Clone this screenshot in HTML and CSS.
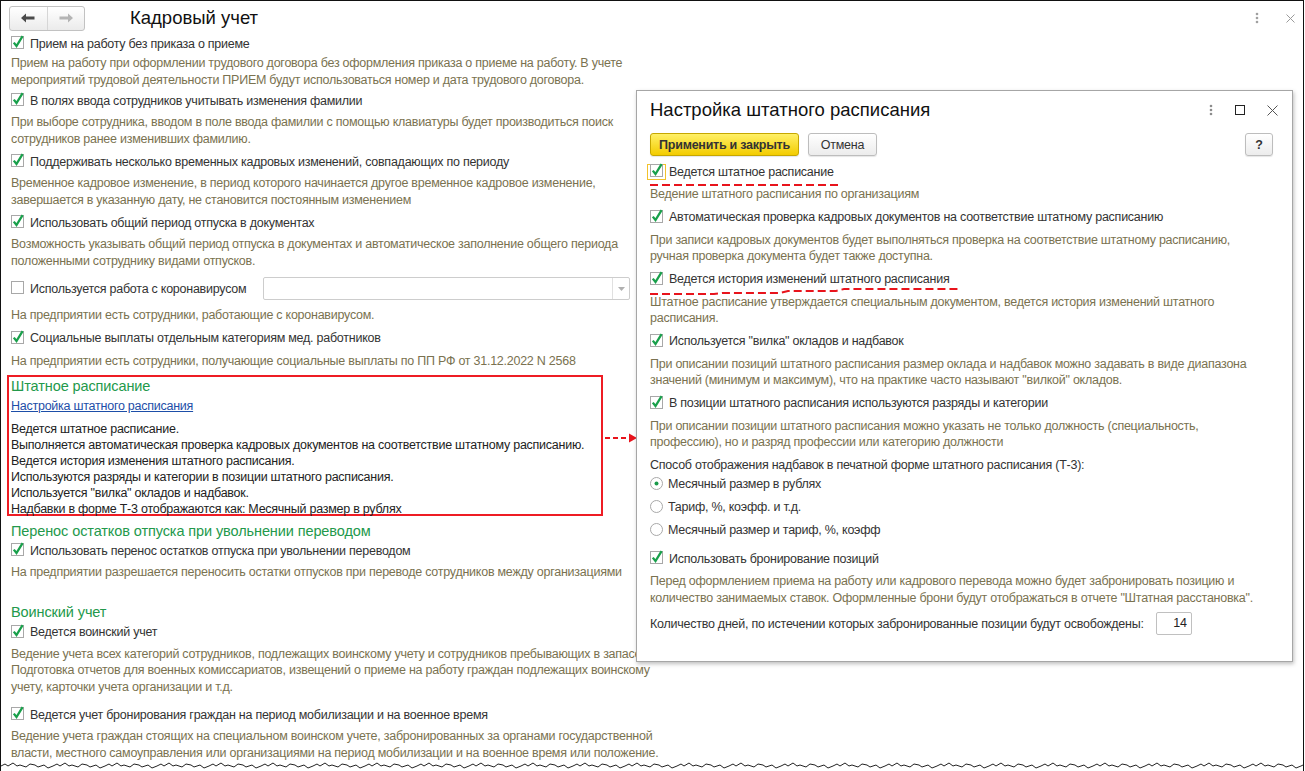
FILE: index.html
```html
<!DOCTYPE html>
<html lang="ru">
<head>
<meta charset="UTF-8">
<title>Кадровый учет</title>
<link rel="stylesheet" href="styles.css">
</head>
<body>
<div class="screen">

  <div class="topbar">
    <div class="nav">
      <span class="nav-btn">
        <svg width="14" height="10" viewBox="0 0 14 10"><path d="M0 5L5 0.5V3.5H13.5V6.5H5V9.5Z" fill="#4a4a4a"/></svg>
      </span>
      <span class="nav-btn">
        <svg width="14" height="10" viewBox="0 0 14 10"><path d="M14 5L9 0.5V3.5H0.5V6.5H9V9.5Z" fill="#b4b4b4"/></svg>
      </span>
    </div>
    <h1 class="title">Кадровый учет</h1>
    <div class="page-menu">
      <svg width="4" height="12" viewBox="0 0 4 12"><circle cx="2" cy="2" r="1.3" fill="#a0a0a0"/><circle cx="2" cy="6" r="1.3" fill="#a0a0a0"/><circle cx="2" cy="10" r="1.3" fill="#a0a0a0"/></svg>
      <svg width="9" height="9" viewBox="0 0 9 9"><path d="M0.5 0.5L8.5 8.5M8.5 0.5L0.5 8.5" stroke="#9a9a9a" stroke-width="1"/></svg>
    </div>
  </div>

  <div class="content">
    <div class="check">
      <svg class="cb" width="14" height="15" viewBox="0 0 14 15"><rect x="0.5" y="1.5" width="12" height="12" fill="#fff" stroke="#a8a8a8"/><path d="M2.8 7.6l2.7 3.4L11.6 1.2" fill="none" stroke="#19a04b" stroke-width="2.3"/></svg>
      <span>Прием на работу без приказа о приеме</span>
    </div>
    <div class="desc desc-first">Прием на работу при оформлении трудового договора без оформления приказа о приеме на работу. В учете<br>мероприятий трудовой деятельности ПРИЕМ будут использоваться номер и дата трудового договора.</div>

    <div class="check">
      <svg class="cb" width="14" height="15" viewBox="0 0 14 15"><rect x="0.5" y="1.5" width="12" height="12" fill="#fff" stroke="#a8a8a8"/><path d="M2.8 7.6l2.7 3.4L11.6 1.2" fill="none" stroke="#19a04b" stroke-width="2.3"/></svg>
      <span>В полях ввода сотрудников учитывать изменения фамилии</span>
    </div>
    <div class="desc">При выборе сотрудника, вводом в поле ввода фамилии с помощью клавиатуры будет производиться поиск<br>сотрудников ранее изменивших фамилию.</div>

    <div class="check">
      <svg class="cb" width="14" height="15" viewBox="0 0 14 15"><rect x="0.5" y="1.5" width="12" height="12" fill="#fff" stroke="#a8a8a8"/><path d="M2.8 7.6l2.7 3.4L11.6 1.2" fill="none" stroke="#19a04b" stroke-width="2.3"/></svg>
      <span>Поддерживать несколько временных кадровых изменений, совпадающих по периоду</span>
    </div>
    <div class="desc">Временное кадровое изменение, в период которого начинается другое временное кадровое изменение,<br>завершается в указанную дату, не становится постоянным изменением</div>

    <div class="check">
      <svg class="cb" width="14" height="15" viewBox="0 0 14 15"><rect x="0.5" y="1.5" width="12" height="12" fill="#fff" stroke="#a8a8a8"/><path d="M2.8 7.6l2.7 3.4L11.6 1.2" fill="none" stroke="#19a04b" stroke-width="2.3"/></svg>
      <span>Использовать общий период отпуска в документах</span>
    </div>
    <div class="desc">Возможность указывать общий период отпуска в документах и автоматическое заполнение общего периода<br>положенными сотруднику видами отпусков.</div>

    <div class="check check-combo">
      <svg class="cb" width="14" height="15" viewBox="0 0 14 15"><rect x="0.5" y="1.5" width="12" height="12" fill="#fff" stroke="#a8a8a8"/></svg>
      <span>Используется работа с коронавирусом</span>
      <div class="combo"><span class="combo-btn"><svg width="7" height="4" viewBox="0 0 7 4"><path d="M0 0H7L3.5 4Z" fill="#b0b0b0"/></svg></span></div>
    </div>
    <div class="desc desc-short">На предприятии есть сотрудники, работающие с коронавирусом.</div>

    <div class="check">
      <svg class="cb" width="14" height="15" viewBox="0 0 14 15"><rect x="0.5" y="1.5" width="12" height="12" fill="#fff" stroke="#a8a8a8"/><path d="M2.8 7.6l2.7 3.4L11.6 1.2" fill="none" stroke="#19a04b" stroke-width="2.3"/></svg>
      <span>Социальные выплаты отдельным категориям мед. работников</span>
    </div>
    <div class="desc desc-tail">На предприятии есть сотрудники, получающие социальные выплаты по ПП РФ от 31.12.2022 N 2568</div>

    <div class="marked">
      <div class="group-title">Штатное расписание</div>
      <a class="link" href="#">Настройка штатного расписания</a>
      <div class="summary">Ведется штатное расписание.<br>Выполняется автоматическая проверка кадровых документов на соответствие штатному расписанию.<br>Ведется история изменения штатного расписания.<br>Используются разряды и категории в позиции штатного расписания.<br>Используется "вилка" окладов и надбавок.<br>Надбавки в форме Т-3 отображаются как: Месячный размер в рублях</div>
    </div>

    <div class="group-title group-gap">Перенос остатков отпуска при увольнении переводом</div>
    <div class="check">
      <svg class="cb" width="14" height="15" viewBox="0 0 14 15"><rect x="0.5" y="1.5" width="12" height="12" fill="#fff" stroke="#a8a8a8"/><path d="M2.8 7.6l2.7 3.4L11.6 1.2" fill="none" stroke="#19a04b" stroke-width="2.3"/></svg>
      <span>Использовать перенос остатков отпуска при увольнении переводом</span>
    </div>
    <div class="desc">На предприятии разрешается переносить остатки отпусков при переводе сотрудников между организациями</div>

    <div class="group-title group-gap-lg">Воинский учет</div>
    <div class="check">
      <svg class="cb" width="14" height="15" viewBox="0 0 14 15"><rect x="0.5" y="1.5" width="12" height="12" fill="#fff" stroke="#a8a8a8"/><path d="M2.8 7.6l2.7 3.4L11.6 1.2" fill="none" stroke="#19a04b" stroke-width="2.3"/></svg>
      <span>Ведется воинский учет</span>
    </div>
    <div class="desc desc-loose">Ведение учета всех категорий сотрудников, подлежащих воинскому учету и сотрудников пребывающих в запасе.<br>Подготовка отчетов для военных комиссариатов, извещений о приеме на работу граждан подлежащих воинскому<br>учету, карточки учета организации и т.д.</div>

    <div class="check">
      <svg class="cb" width="14" height="15" viewBox="0 0 14 15"><rect x="0.5" y="1.5" width="12" height="12" fill="#fff" stroke="#a8a8a8"/><path d="M2.8 7.6l2.7 3.4L11.6 1.2" fill="none" stroke="#19a04b" stroke-width="2.3"/></svg>
      <span>Ведется учет бронирования граждан на период мобилизации и на военное время</span>
    </div>
    <div class="desc">Ведение учета граждан стоящих на специальном воинском учете, забронированных за органами государственной<br>власти, местного самоуправления или организациями на период мобилизации и на военное время или положение.</div>
  </div>

  <!-- стрелка от блока к форме -->
  <svg class="pointer" width="34" height="12" viewBox="0 0 34 12"><path d="M0 6H24" stroke="#e8141c" stroke-width="2" stroke-dasharray="5 3"/><path d="M24 1.5L32 6L24 10.5Z" fill="#e8141c"/></svg>

  <div class="dialog">
    <div class="dlg-head">
      <div class="dlg-title">Настройка штатного расписания</div>
      <div class="dlg-icons">
        <svg width="4" height="12" viewBox="0 0 4 12"><circle cx="2" cy="2" r="1.3" fill="#8c8c8c"/><circle cx="2" cy="6" r="1.3" fill="#8c8c8c"/><circle cx="2" cy="10" r="1.3" fill="#8c8c8c"/></svg>
        <svg width="10" height="10" viewBox="0 0 10 10"><rect x="0.5" y="0.5" width="9" height="9" fill="none" stroke="#222"/></svg>
        <svg width="11" height="11" viewBox="0 0 11 11"><path d="M0.5 0.5L10.5 10.5M10.5 0.5L0.5 10.5" stroke="#555" stroke-width="1"/></svg>
      </div>
    </div>

    <div class="dlg-buttons">
      <button class="btn btn-primary">Применить и закрыть</button>
      <button class="btn btn-cancel">Отмена</button>
      <button class="btn btn-help">?</button>
    </div>

    <div class="check check-first">
      <span class="focus"><svg class="cb" width="14" height="15" viewBox="0 0 14 15"><rect x="0.5" y="1.5" width="12" height="12" fill="#fff" stroke="#a8a8a8"/><path d="M2.8 7.6l2.7 3.4L11.6 1.2" fill="none" stroke="#19a04b" stroke-width="2.3"/></svg></span>
      <span>Ведется штатное расписание</span>
    </div>
    <div class="desc">Ведение штатного расписания по организациям</div>

    <div class="check">
      <svg class="cb" width="14" height="15" viewBox="0 0 14 15"><rect x="0.5" y="1.5" width="12" height="12" fill="#fff" stroke="#a8a8a8"/><path d="M2.8 7.6l2.7 3.4L11.6 1.2" fill="none" stroke="#19a04b" stroke-width="2.3"/></svg>
      <span>Автоматическая проверка кадровых документов на соответствие штатному расписанию</span>
    </div>
    <div class="desc">При записи кадровых документов будет выполняться проверка на соответствие штатному расписанию,<br>ручная проверка документа будет также доступна.</div>

    <div class="check">
      <svg class="cb" width="14" height="15" viewBox="0 0 14 15"><rect x="0.5" y="1.5" width="12" height="12" fill="#fff" stroke="#a8a8a8"/><path d="M2.8 7.6l2.7 3.4L11.6 1.2" fill="none" stroke="#19a04b" stroke-width="2.3"/></svg>
      <span>Ведется история изменений штатного расписания</span>
    </div>
    <div class="desc">Штатное расписание утверждается специальным документом, ведется история изменений штатного<br>расписания.</div>

    <div class="check">
      <svg class="cb" width="14" height="15" viewBox="0 0 14 15"><rect x="0.5" y="1.5" width="12" height="12" fill="#fff" stroke="#a8a8a8"/><path d="M2.8 7.6l2.7 3.4L11.6 1.2" fill="none" stroke="#19a04b" stroke-width="2.3"/></svg>
      <span>Используется "вилка" окладов и надбавок</span>
    </div>
    <div class="desc">При описании позиций штатного расписания размер оклада и надбавок можно задавать в виде диапазона<br>значений (минимум и максимум), что на практике часто называют "вилкой" окладов.</div>

    <div class="check">
      <svg class="cb" width="14" height="15" viewBox="0 0 14 15"><rect x="0.5" y="1.5" width="12" height="12" fill="#fff" stroke="#a8a8a8"/><path d="M2.8 7.6l2.7 3.4L11.6 1.2" fill="none" stroke="#19a04b" stroke-width="2.3"/></svg>
      <span>В позиции штатного расписания используются разряды и категории</span>
    </div>
    <div class="desc">При описании позиции штатного расписания можно указать не только должность (специальность,<br>профессию), но и разряд профессии или категорию должности</div>

    <div class="label">Способ отображения надбавок в печатной форме штатного расписания (Т-3):</div>
    <div class="radio">
      <svg width="13" height="13" viewBox="0 0 13 13"><circle cx="6.5" cy="6.5" r="6" fill="#fff" stroke="#a8a8a8"/><circle cx="6.5" cy="6.5" r="2" fill="#1a9a4a"/></svg>
      <span>Месячный размер в рублях</span>
    </div>
    <div class="radio">
      <svg width="13" height="13" viewBox="0 0 13 13"><circle cx="6.5" cy="6.5" r="6" fill="#fff" stroke="#a8a8a8"/></svg>
      <span>Тариф, %, коэфф. и т.д.</span>
    </div>
    <div class="radio">
      <svg width="13" height="13" viewBox="0 0 13 13"><circle cx="6.5" cy="6.5" r="6" fill="#fff" stroke="#a8a8a8"/></svg>
      <span>Месячный размер и тариф, %, коэфф</span>
    </div>

    <div class="check check-after-radio">
      <svg class="cb" width="14" height="15" viewBox="0 0 14 15"><rect x="0.5" y="1.5" width="12" height="12" fill="#fff" stroke="#a8a8a8"/><path d="M2.8 7.6l2.7 3.4L11.6 1.2" fill="none" stroke="#19a04b" stroke-width="2.3"/></svg>
      <span>Использовать бронирование позиций</span>
    </div>
    <div class="desc">Перед оформлением приема на работу или кадрового перевода можно будет забронировать позицию и<br>количество занимаемых ставок. Оформленные брони будут отображаться в отчете "Штатная расстановка".</div>

    <div class="field">
      <span>Количество дней, по истечении которых забронированные позиции будут освобождены:</span>
      <span class="num-input">14</span>
    </div>

    <!-- пометки красным пунктиром -->
    <svg class="mark mark-first" width="190" height="4" viewBox="0 0 190 4"><path d="M0 2H188" stroke="#e8141c" stroke-width="2" stroke-dasharray="8 4"/></svg>
    <svg class="mark mark-history" width="312" height="10" viewBox="0 0 312 10"><path d="M0 8H64L72 7H130L138 5H186L194 3H310" fill="none" stroke="#e8141c" stroke-width="2" stroke-dasharray="8 4"/></svg>
  </div>

  <svg class="torn" width="1305" height="14">
    <defs>
      <pattern id="tear" width="52" height="14" patternUnits="userSpaceOnUse">
        <path d="M0 6l4 -2l3 2l5 -3l4 3l3 -1l6 2l4 -3l5 1l3 2l6 -2l4 3l5 -2V14H0Z" fill="#fff"/>
        <path d="M0 6l4 -2l3 2l5 -3l4 3l3 -1l6 2l4 -3l5 1l3 2l6 -2l4 3l5 -2" fill="none" stroke="#222" stroke-width="1"/>
      </pattern>
    </defs>
    <rect width="1305" height="14" fill="url(#tear)"/>
  </svg>
</div>
</body>
</html>
```

FILE: styles.css
```css
/* Кадровый учет + форма настройки */
body { margin: 0; font-family: "Liberation Sans", Arial, sans-serif; font-size: 12.5px; letter-spacing: -0.25px; color: #333; background: #fff; }
.screen { position: relative; width: 1304px; height: 771px; border: 1px solid #111; border-bottom: none; box-sizing: border-box; overflow: hidden; background: #fff; }

.topbar { display: flex; align-items: center; height: 24px; padding: 5px 0 0 8px; }
.nav { display: flex; width: 76px; height: 25px; border: 1px solid #c2c2c2; border-radius: 3px; background: linear-gradient(#fff, #ebebeb); box-sizing: border-box; }
.nav-btn { flex: 1; display: flex; align-items: center; justify-content: center; }
.nav-btn + .nav-btn { border-left: 1px solid #d6d6d6; }
.title { margin: 0 0 0 45px; font-size: 18.5px; font-weight: normal; letter-spacing: 0; color: #111; }
.page-menu { margin-left: auto; margin-right: 8px; display: flex; align-items: center; gap: 27px; }

.content { padding: 5px 0 0 10px; width: 680px; }
.check { display: flex; align-items: center; gap: 5px; height: 17px; white-space: nowrap; }
.cb { flex: none; margin-top: -2px; }
.desc { color: #7a7250; line-height: 16.5px; margin: 5px 0 6px; white-space: nowrap; }
.desc-first { margin: 3px 0 4px; }
.desc-short { margin: 7px 0 6px; }
.desc-tail { margin-top: 6px; }
.desc-loose { margin-bottom: 11px; }

.check-combo { height: 23px; margin-top: 8px; }
.combo { margin-left: 12px; width: 367px; height: 23px; border: 1px solid #cdcdcd; border-radius: 2px; box-sizing: border-box; display: flex; justify-content: flex-end; }
.combo-btn { width: 16px; border-left: 1px solid #e0e0e0; display: flex; align-items: center; justify-content: center; }

.group-title { color: #23994b; font-size: 14.5px; line-height: 18px; letter-spacing: -0.1px; white-space: nowrap; }
.group-gap { margin-top: 6px; margin-bottom: 2px; }
.group-gap-lg { margin-top: 22px; margin-bottom: 3px; }

.marked { margin: 6px 0 0 -4px; width: 596px; border: 2px solid #ee1c24; box-sizing: border-box; padding: 0 2px; }
.link { display: block; width: fit-content; margin-top: 2.5px; color: #1d4ea8; text-decoration: underline; line-height: 17px; }
.summary { margin: 6.5px 0 -3px; color: #222; line-height: 16px; white-space: nowrap; }

.pointer { position: absolute; left: 604px; top: 431px; }

.dialog { position: absolute; left: 635px; top: 89px; width: 657px; height: 572px; box-sizing: border-box; border: 1px solid #a6a6a6; box-shadow: 1px 2px 4px rgba(0, 0, 0, 0.25); background: #fff; padding: 0 13px; }
.dlg-head { display: flex; align-items: center; height: 38px; }
.dlg-title { font-size: 18.5px; letter-spacing: 0; color: #111; }
.dlg-icons { margin-left: auto; margin-right: 1px; display: flex; align-items: center; gap: 22px; }
.dlg-buttons { display: flex; gap: 9px; margin-top: 4px; }
.btn { height: 23px; padding: 0; font-family: inherit; font-size: 12.5px; letter-spacing: -0.25px; color: #333; border: 1px solid #bdbdbd; border-radius: 3px; background: linear-gradient(#fff, #ececec); box-shadow: 0 1px 1px rgba(0, 0, 0, 0.1); }
.btn-primary { width: 149px; font-weight: bold; border-color: #c6a700; background: linear-gradient(#fff066, #f3cc00); }
.btn-cancel { width: 69px; }
.btn-help { margin-left: auto; width: 28px; font-weight: bold; margin-right: 6px; }

.dialog .check-first { margin-top: 7px; }
.dialog .desc { margin: 6px 0 6px; }
.focus { display: flex; margin-left: -3px; margin-right: -2px; padding: 0 1px 1px 2px; border: 1px solid #f2c22c; }

.label { line-height: 17px; white-space: nowrap; }
.radio { display: flex; align-items: center; gap: 5px; height: 17px; margin-top: 6px; white-space: nowrap; }
.label + .radio { margin-top: 1.5px; }
.dialog .check-after-radio { margin-top: 12px; }

.field { display: flex; align-items: center; gap: 12px; margin-top: 3.5px; white-space: nowrap; }
.num-input { width: 36px; height: 23px; border: 1px solid #c0c0c0; border-radius: 2px; box-sizing: border-box; text-align: right; padding-right: 4px; line-height: 21px; color: #222; }

.mark { position: absolute; }
.mark-first { left: 13px; top: 92px; }
.mark-history { left: 13px; top: 195px; }

.torn { position: absolute; left: 0; top: 759px; }
```
